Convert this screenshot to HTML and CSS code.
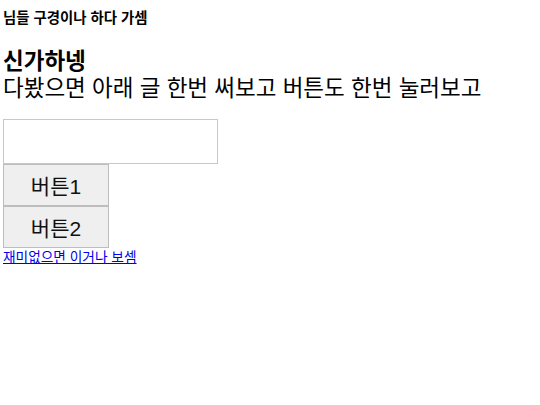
FILE: index.html
```html
<!DOCTYPE html>
<html>

<head>
    <title>신가하넹</title>
    <link rel="stylesheet" href="styles.css">
</head>

<body>
    <div class="top">님들 구경이나 하다 가셈</div>

    <div class="intro">
        <div class="title">신가하넹</div>
        <div class="desc">다봤으면 아래 글 한번 써보고 버튼도 한번 눌러보고</div>
    </div>

    <div class="form">
        <input class="text" type="text">
        <button class="btn">버튼1</button>
        <button class="btn">버튼2</button>
        <a class="link" href="#">재미없으면 이거나 보셈</a>
    </div>
</body>

</html>
```

FILE: styles.css
```css
body {
    margin: 3px;
    font-family: "Liberation Sans", "Noto Sans CJK KR", sans-serif;
    color: #000;
    background: #fff;
}

.top {
    margin-top: 6px;
    font-size: 14.4px;
    font-weight: bold;
    line-height: 18px;
}

.intro {
    margin-top: 21px;
}

.title {
    font-size: 22.5px;
    font-weight: bold;
    line-height: 27px;
}

.desc {
    font-size: 22.5px;
    line-height: 28px;
}

.form {
    margin-top: 16px;
    display: flex;
    flex-direction: column;
    align-items: flex-start;
}

.text {
    width: 215px;
    height: 45px;
    box-sizing: border-box;
    border: 1px solid #c8c8c8;
    margin: 0;
}

.btn {
    width: 106px;
    height: 42px;
    box-sizing: border-box;
    margin: 0;
    border: 1px solid #bdbdbd;
    background: #efefef;
    font-family: "Liberation Sans", "Noto Sans CJK KR", sans-serif;
    font-size: 21px;
    color: #111;
    padding: 0;
}

.link {
    margin-top: 1px;
    font-size: 13.7px;
    color: #0000ee;
    line-height: 17px;
}
```
